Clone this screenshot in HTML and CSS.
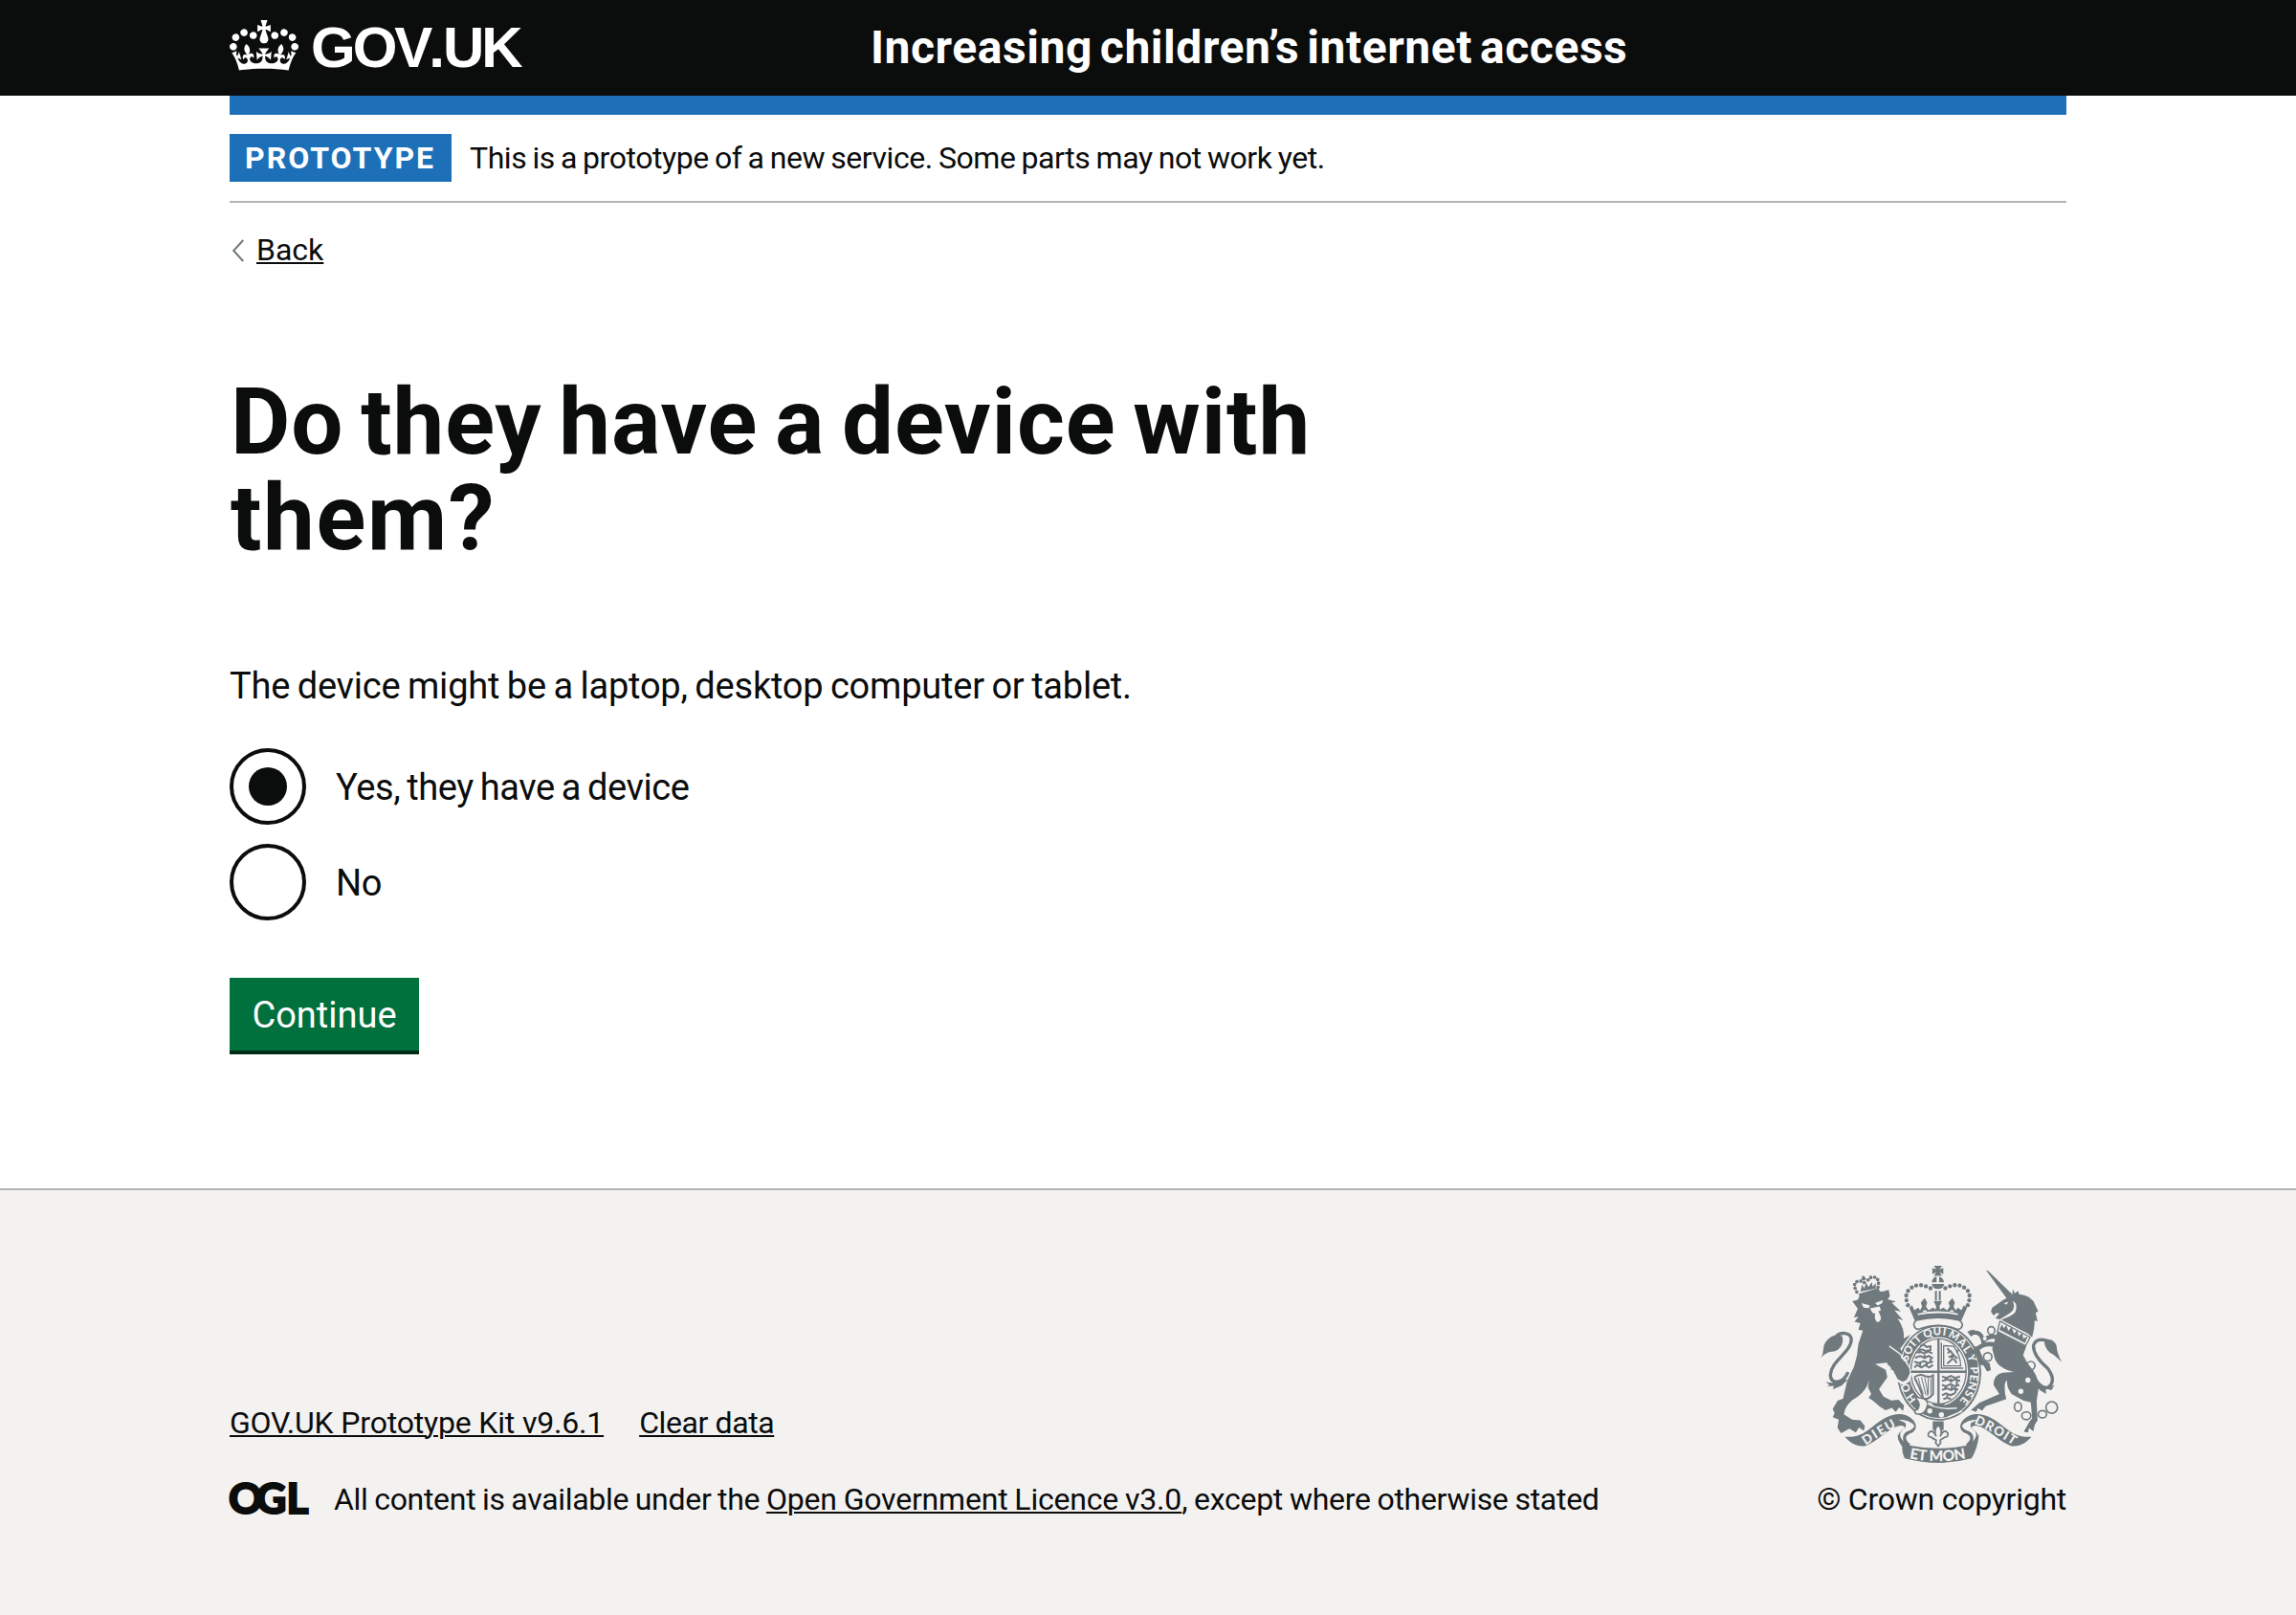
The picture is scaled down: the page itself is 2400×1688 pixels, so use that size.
FILE: index.html
```
<!DOCTYPE html>
<html lang="en">
<head>
<meta charset="utf-8">
<title>Do they have a device with them? - GOV.UK</title>
<link rel="stylesheet" href="styles.css">
</head>
<body>
<header class="header">
  <div class="container header-inner">
    <a class="logo" href="#">
      <svg class="logo-crown" viewBox="0 0 132 97" aria-hidden="true"><path fill="currentColor" d="M25 30.2c3.5 1.5 7.7-.2 9.1-3.7 1.5-3.6-.2-7.8-3.9-9.2-3.6-1.4-7.6.3-9.1 3.9-1.4 3.5.3 7.5 3.9 9zM9 39.5c3.6 1.5 7.8-.2 9.2-3.7 1.5-3.6-.2-7.8-3.9-9.1-3.6-1.5-7.6.2-9.1 3.8-1.4 3.5.3 7.5 3.8 9zM4.4 57.2c3.5 1.5 7.7-.2 9.1-3.8 1.5-3.6-.2-7.7-3.9-9.1-3.5-1.5-7.6.3-9.1 3.8-1.4 3.5.3 7.6 3.9 9.1zm38.3-21.4c3.5 1.5 7.7-.2 9.1-3.8 1.5-3.6-.2-7.7-3.9-9.1-3.6-1.5-7.6.3-9.1 3.8-1.3 3.6.4 7.7 3.9 9.1zm64.4-5.6c-3.6 1.5-7.8-.2-9.1-3.7-1.5-3.6.2-7.8 3.8-9.2 3.6-1.4 7.7.3 9.2 3.9 1.3 3.5-.4 7.5-3.9 9zm15.9 9.3c-3.6 1.5-7.7-.2-9.1-3.7-1.5-3.6.2-7.8 3.7-9.1 3.6-1.5 7.7.2 9.2 3.8 1.5 3.5-.3 7.5-3.8 9zm4.7 17.7c-3.6 1.5-7.8-.2-9.2-3.8-1.5-3.6.2-7.7 3.9-9.1 3.6-1.5 7.7.3 9.2 3.8 1.3 3.5-.4 7.6-3.9 9.1zM89.3 35.8c-3.6 1.5-7.8-.2-9.2-3.8-1.4-3.6.2-7.7 3.9-9.1 3.6-1.5 7.7.3 9.2 3.8 1.4 3.6-.3 7.7-3.9 9.1zM69.7 17.7l8.9 4.7V9.3l-8.9 2.8c-.2-.3-.5-.6-.9-.9L72.4 0H59.6l3.5 11.2c-.3.3-.6.5-.9.9l-8.8-2.8v13.1l8.8-4.7c.3.3.6.7.9.9l-5 15.4v.1c-.2.8-.4 1.6-.4 2.4 0 4.1 3.1 7.5 7 8.1h.2c.3 0 .7.1 1 .1.4 0 .7 0 1-.1h.2c4-.6 7.1-4.1 7.1-8.1 0-.8-.1-1.7-.4-2.4V34l-5.1-15.4c.4-.2.7-.6 1-.9zM66 92.8c16.9 0 32.8 1.1 47.1 3.2 4-16.9 8.9-26.7 14-33.5l-9.6-3.4c1 4.9 1.1 7.2 0 10.2-1.5-1.4-3-4.3-4.2-8.7L108.6 76c2.8-2 5-3.2 7.5-3.3-4.4 9.4-10 11.9-13.6 11.2-4.3-.8-6.3-4.6-5.6-7.9 1-4.7 5.7-5.9 8-.5 4.3-8.7-3-11.4-7.6-8.8 7.1-7.2 7.9-13.5 2.1-21.1-8 6.1-8.1 12.3-4.5 20.8-4.7-5.4-12.1-2.5-9.5 6.2 3.4-5.2 7.9-2 7.2 3.1-.6 4.3-6.4 7.8-13.5 7.2-10.3-.9-10.9-8-11.2-13.8 2.5-.5 7.1 1.8 11 7.3L80.2 60c-4.1 4.4-8 5.3-12.3 5.4 1.4-4.4 8-11.6 8-11.6H55.5s6.4 7.2 7.9 11.6c-4.2-.1-8-1-12.3-5.4l1.4 16.4c3.9-5.5 8.5-7.7 10.9-7.3-.3 5.8-.9 12.8-11.1 13.8-7.2.6-12.9-2.9-13.5-7.2-.7-5 3.8-8.3 7.1-3.1 2.7-8.7-4.6-11.6-9.4-6.2 3.7-8.5 3.6-14.7-4.6-20.8-5.8 7.6-5 13.9 2.2 21.1-4.7-2.6-11.9.1-7.7 8.8 2.3-5.5 7.1-4.2 8.1.5.7 3.3-1.3 7.1-5.7 7.9-3.5.7-9-1.8-13.5-11.2 2.5.1 4.7 1.3 7.5 3.3l-4.7-15.4c-1.2 4.4-2.7 7.2-4.3 8.7-1.1-3-.9-5.3 0-10.2l-9.5 3.4c5 6.9 9.9 16.7 14 33.5 14.8-2.1 30.8-3.2 47.7-3.2z"/></svg>
      <span class="logo-text">GOV<span class="logo-dot">.</span>UK</span>
    </a>
    <a class="service-name" href="#">Increasing children’s internet access</a>
  </div>
</header>

<div class="container">
  <div class="header-bar"></div>
  <div class="phase-banner">
    <strong class="tag">PROTOTYPE</strong>
    <span class="phase-text">This is a prototype of a new service. Some parts may not work yet.</span>
  </div>
  <a class="back-link" href="#">
    <svg class="chevron" viewBox="0 0 14 24" aria-hidden="true"><path d="M12.2 1 2.2 12l10 11" fill="none" stroke="#6f777b" stroke-width="2"/></svg>
    <span class="back-text">Back</span>
  </a>
  <main class="main">
    <h1 class="heading">Do they have a device with <span class="heading-end">them?</span></h1>
    <p class="body">The device might be a laptop, desktop computer or tablet.</p>
    <div class="radios">
      <div class="radio"><span class="radio-ring radio-on"></span><span class="radio-label">Yes, they have a device</span></div>
      <div class="radio"><span class="radio-ring"></span><span class="radio-label">No</span></div>
    </div>
    <button class="button" type="button">Continue</button>
  </main>
</div>

<footer class="footer">
  <div class="container footer-inner">
    <div class="footer-meta">
      <div class="footer-links">
        <a class="footer-link link-kit" href="#">GOV.UK Prototype Kit v9.6.1</a>
        <a class="footer-link link-clear" href="#">Clear data</a>
      </div>
      <div class="licence">
        <svg class="ogl" viewBox="0 0 82 34" aria-label="Open Government Licence"><text class="ogl-text" x="-1 27.5 59.5" y="32.5">OGL</text></svg>
        <span class="licence-text"><span class="lic-a">All content is available under the </span><a class="footer-link lic-b" href="#">Open Government Licence v3.0</a><span class="lic-c">, except where otherwise stated</span></span>
      </div>
    </div>
    <div class="copyright">
      <svg class="crest" viewBox="4 3 832 684" aria-hidden="true">
        <!-- lion: tail, body, face -->
        <g class="ink">
          <path class="line" stroke-width="10" d="M128 372C112 410 72 412 73 380C76 335 140 310 138 268C134 248 104 246 90 262"/>
          <path d="M40 331C56 318 46 292 60 276C78 256 98 252 110 262C116 282 104 304 84 308C66 308 52 318 40 331Z"/>
          <path d="M112 390C98 406 78 408 58 402L70 412L62 416L84 416L80 426L108 414L126 396Z"/>
          <path d="M141 152L158 147L163 137Q205 120 238 121L254 116L258 136L251 146L277 153L264 157L292 184L272 180L299 211L282 206Q304 236 301 268L322 256L290 300L312 335L321 375L312 398L295 402L283 394L292 380L272 378L280 364L260 364L268 350L250 350L256 342Q232 344 212 347L245 365L250 388L224 425L238 448L262 460L285 458L302 476L299 493L287 482L276 496L264 483L244 491L225 478L208 463L192 452L200 440L190 420L193 398Q185 430 158 448Q118 470 115 503L140 520L166 522L180 540L177 555L162 544L152 560L132 548L106 562L95 545L99 520L80 512L86 500L80 486L96 460L112 455L125 400L146 356Q158 320 160 285L174 243L160 240L166 220L148 216L160 200L146 202L158 175Z"/>
          <path d="M161 129L222 111L227 121L164 139Z"/>
          <path class="line" stroke-width="11" stroke-linecap="round" stroke-dasharray="0 12" d="M155 123Q137 90 166 89Q178 90 183 100M221 108Q228 74 201 77Q190 80 188 92"/>
          <path d="M172 72L180 76L184 84L176 88L170 84ZM166 122L172 100L178 112L184 94L191 108L202 92L204 106L214 96L214 112Z"/>
        </g>
        <g class="paper">
          <path d="M170 158L196 165L192 173L176 172ZM212 158L236 148L234 158L220 165Z"/>
          <path d="M196 174L226 168L230 180L222 184Q238 208 222 217Q208 214 212 190L204 188Z"/>
        </g>

        <!-- garter, motto and shield -->
        <g class="ink">
          <ellipse cx="411" cy="374" rx="131" ry="149"/>
        </g>
        <ellipse class="gap" cx="411" cy="374" rx="124" ry="142" stroke-width="3"/>
        <ellipse class="paper" cx="409" cy="370" rx="92" ry="107"/>
        <ellipse class="line" cx="409" cy="370" rx="86" ry="101" stroke-width="4"/>
        <path class="paper" d="M276 330L304 326L314 344L328 374L318 402L300 412L276 400Z"/>
        <path class="ink" d="M250 288L286 314L304 338L318 360L320 376L310 396L298 402L282 394L270 370L246 340Z"/>
        <path class="gap" stroke-width="4" d="M256 291L290 316L304 338"/>
        <g class="garter-text">
          <text transform="translate(325 453) rotate(-126)" y="12">H</text><text transform="translate(307 421) rotate(-110)" y="12">O</text>
          <text transform="translate(305 327) rotate(-69)" y="12">S</text><text transform="translate(315 303) rotate(-58)" y="12">O</text><text transform="translate(329 283) rotate(-49)" y="12">I</text><text transform="translate(343 269) rotate(-41)" y="12">T</text>
          <text transform="translate(375 251) rotate(-18)" y="12">Q</text><text transform="translate(405 245) rotate(-2)" y="12">U</text><text transform="translate(428 246) rotate(9)" y="12">I</text>
          <text transform="translate(458 259) rotate(30)" y="12">M</text><text transform="translate(483 280) rotate(45)" y="12">A</text><text transform="translate(499 301) rotate(57)" y="12">L</text>
          <text transform="translate(513 328) rotate(71)" y="12">Y</text>
          <text transform="translate(520 366) rotate(87)" y="12">P</text><text transform="translate(519 390) rotate(96)" y="12">E</text><text transform="translate(514 415) rotate(106)" y="12">N</text><text transform="translate(504 440) rotate(116)" y="12">S</text><text transform="translate(490 461) rotate(127)" y="12">E</text>
        </g>
        <g class="ink">
          <path class="line" stroke-width="7" d="M409 268V470M323 371H495"/>
          <path d="M388 470H430L420 480H398Z"/>
          <path class="line" stroke-width="6" d="M352 292l10 -6l10 8l12 -2v14M346 302l14 0l8 4l14 -2M338 312l14 -4l12 6l14 -6l12 6M336 328l16 -6l14 6l12 -6l14 8M334 340l14 4l16 -6l12 6l16 -4M334 358l8 -8l14 8l12 -8l12 8l12 -8M350 304v10M366 318v12M384 330v12M352 340v14M372 344v12"/>
          <path class="line" stroke-width="6" d="M420 386l14 4l14 -6l12 6l16 -4M420 400l16 -6l12 6l14 -6l14 6M420 412l12 4l14 -6l14 6l14 -4M420 428l14 -6l14 6l12 -6l10 6M420 444l12 -6l14 6l14 -6M424 456l12 -4l12 4M430 386v14M448 392v14M466 398v14M430 414v14M450 416v14M436 438v14M462 424v14"/>
          <path class="line" stroke-width="4" d="M418 280V360H486M425 290V353H478Q478 322 456 292Z"/>
          <path class="line" stroke-width="6" d="M436 298l8 8l-6 8M446 306l10 14l12 10M440 326l14 -6l-4 14l-14 12M456 330l10 14M466 312l4 -10"/>
          <path class="line" stroke-width="6" d="M334 388Q350 376 366 384Q382 390 392 382V440Q378 460 362 454Q352 420 334 388"/>
          <path class="line" stroke-width="3" d="M346 390Q352 418 362 440M356 388Q362 412 370 444M366 388Q372 412 376 446M377 390V440M385 390V442"/>
        </g>
        <path class="belt" d="M346 464Q330 446 350 452Q384 456 372 484Q362 508 340 502Q328 494 344 488Q352 476 346 464Z"/>
        <circle class="paper" cx="382" cy="493" r="8"/><circle class="paper" cx="418" cy="505" r="8"/>
        <path class="gap" stroke-width="4" d="M374 470Q410 490 466 484M438 512L482 494"/>

        <!-- imperial crown -->
        <g class="ink">
          <path d="M395 42H420L412 53L424 48V68L412 62L420 73H395L402 62L390 68V48L402 53Z"/>
          <path d="M388 93Q391 76 403 76V93ZM411 76Q424 78 426 93H411ZM388 98H427Q424 114 407 114Q391 114 388 98Z"/>
          <path class="line" stroke-width="13" stroke-linecap="round" stroke-dasharray="0 15.4" d="M314 164Q300 128 322 112Q344 94 374 107L390 114M500 164Q514 128 493 112Q470 94 440 107L424 114"/>
          <path class="line" stroke-width="6" d="M401 120V150M413 120V150"/>
          <path d="M318 172L327 164L334 180L346 172L352 180L358 168L354 156L366 142L374 156L370 168L378 180L392 172L400 178L402 168L394 152H420L412 168L414 178L424 172L436 180L444 168L440 156L452 142L460 156L456 168L462 180L470 172L480 180L488 164L498 172L480 212Q407 196 335 212Z"/>
          <path class="line" stroke-width="5" d="M340 211Q407 195 474 211Q490 222 478 236Q470 242 458 236Q407 218 356 236Q344 242 338 236Q326 222 340 211Z"/>
        </g>
        <path class="paper" d="M344 190Q407 176 470 190L469 195Q407 182 345 195ZM362 180h8l4 4l-14 2ZM446 180h8l4 6l-14 -2Z"/>
        <path class="paper" d="M345 216Q407 201 469 216Q479 224 472 230Q407 210 342 230Q334 224 345 216Z"/>

        <!-- unicorn -->
        <g class="ink">
          <path d="M557 56L564 58L640 132L622 144Z"/>
          <path d="M640 114L646 127L656 120L660 130Q700 134 710 164L719 183L711 188L717 214L708 212L706 238L700 264L686 252L604 210L632 198Q656 188 650 160L640 150Q650 176 632 188L600 208L586 205L598 190L590 188L580 196L572 184L576 172L610 148L638 134Z"/>
          <path d="M592 246L682 292L672 320Q684 346 704 368Q724 398 719 430L714 462L717 522L708 536L704 556L690 546L688 560L674 558L692 526L700 516L696 466L672 460L636 440Q620 420 622 398Q612 400 616 440L620 456L556 478L544 492L532 484L526 496L510 490L536 468L598 440L580 412Q580 380 608 374L644 372Q594 360 584 330L576 300Z"/>
          <path class="line" stroke-width="13" d="M592 264Q568 256 548 276Q544 256 530 250L506 248"/>
          <path class="line" stroke-width="14" d="M590 288Q560 282 545 290L528 300L544 340L566 352"/>
          <path d="M498 246L520 240L524 252L510 262ZM522 290L514 308L528 326L534 350L548 350L560 370L572 366L568 346L550 340Z"/>
          <path class="line" stroke-width="10" d="M706 388Q730 430 752 418Q776 398 748 360Q704 322 704 290Q712 262 752 276"/>
          <path d="M738 274Q764 262 776 290Q776 310 792 341Q770 318 756 312Q738 298 738 274Z"/>
          <path d="M700 380L726 412L752 420L770 412L760 428L742 424L744 440L724 428L702 404Z"/>
          <g class="links" stroke-width="5">
            <ellipse cx="573" cy="243" rx="11" ry="12"/><circle cx="562" cy="325" r="13"/><circle cx="696" cy="352" r="13"/><ellipse cx="656" cy="480" rx="11" ry="14"/><ellipse cx="682" cy="508" rx="14" ry="12"/><ellipse cx="732" cy="503" rx="13" ry="11"/><circle cx="761" cy="482" r="18"/>
          </g>
        </g>
        <circle class="paper" cx="687" cy="397" r="8"/><circle class="paper" cx="665" cy="432" r="8"/><circle class="paper" cx="553" cy="268" r="6"/>
        <path class="paper" d="M612 158L626 154L620 163Z"/>
        <path class="collar" stroke-width="4" d="M600 214L694 264L680 290L592 246Z"/>
        <path class="ink" d="M598 240L606 224L612 236L620 226L626 244L636 232L644 252L654 242L658 260L670 250L672 268L686 262L678 282Z"/>

        <!-- ribbon -->
        <g>
          <path class="ink" d="M118 573C150 576 172 568 200 545C240 512 270 498 300 504C334 512 352 544 328 560C306 568 300 578 322 597L306 610C270 575 282 562 306 546Q300 534 284 540C250 548 216 592 180 602C150 604 134 590 118 573Z"/>
          <path class="paper" d="M284 520Q322 520 334 540Q330 552 312 556Q294 564 300 588Q280 566 298 552Q312 544 306 530Z"/>
        </g>
        <g transform="matrix(-1 0 0 1 816 0)">
          <path class="ink" d="M118 573C150 576 172 568 200 545C240 512 270 498 300 504C334 512 352 544 328 560C306 568 300 578 322 597L306 610C270 575 282 562 306 546Q300 534 284 540C250 548 216 592 180 602C150 604 134 590 118 573Z"/>
          <path class="paper" d="M284 520Q322 520 334 540Q330 552 312 556Q294 564 300 588Q280 566 298 552Q312 544 306 530Z"/>
        </g>
        <path class="ink" d="M281 566Q290 590 318 600Q408 618 498 600Q526 590 535 566Q530 612 512 640Q408 668 304 640Q296 626 296 604Q284 588 281 566Z"/>
        <path id="dieu" fill="none" d="M183 600Q232 566 292 534"/>
        <path id="droit" fill="none" d="M519 532Q576 556 648 604"/>
        <path id="mon" fill="none" d="M318 640Q408 658 498 640"/>
        <g class="ribbon-text">
          <text><textPath href="#dieu" textLength="112">DIEU</textPath></text>
          <text><textPath href="#droit" textLength="140">DROIT</textPath></text>
          <text class="ribbon-mon"><textPath href="#mon" textLength="178">ET MON</textPath></text>
        </g>
        <g>
          <path class="ink" d="M391 525H425V552H391Z"/>
          <path class="belt" d="M408 536Q424 552 414 572Q426 546 438 562Q440 574 430 574Q420 580 414 584L416 592L408 602L400 592L402 584Q394 580 386 574Q374 574 378 562Q390 546 402 572Q392 552 408 536Z"/>
        </g>
      </svg>
      <a class="copyright-text" href="#">© Crown copyright</a>
    </div>
  </div>
</footer>
</body>
</html>
```
FILE: styles.css
```
* { box-sizing: border-box; }

body {
  margin: 0;
  background: #fff;
  color: #0b0c0c;
  font: 400 32px/50px Roboto, "Liberation Sans", sans-serif;
}

a { color: inherit; text-decoration: none; }

.container { width: 1920px; margin: 0 auto; }

.header { background: #0b0c0c; color: #fff; }
.header-inner { display: grid; grid-template-columns: 670px 1fr; height: 100px; align-items: center; }
.logo { display: flex; align-items: center; }
.logo-crown { display: block; width: 72px; height: 53px; margin-top: -5px; }
.logo-text { margin: 0 0 0 13px; font: 700 60px/60px "Liberation Sans", Arial, sans-serif; letter-spacing: -3px; }
.logo-dot { margin: 0 1px 0 -1px; }
.service-name { font-size: 48px; line-height: 50px; font-weight: 700; letter-spacing: 0.55px; word-spacing: -4.5px; white-space: nowrap; }

.header-bar { height: 20px; background: #1d70b8; }
.phase-banner { display: flex; padding: 20px 0; border-bottom: 2px solid #b1b4b6; }
.tag { width: 232px; margin-right: 19px; padding-left: 16px; background: #1d70b8; color: #fff; font-weight: 700; letter-spacing: 2px; }
.phase-text { letter-spacing: -0.43px; word-spacing: -1.4px; white-space: nowrap; }

.back-link { display: flex; align-items: center; width: max-content; margin-top: 24px; }
.chevron { width: 14px; height: 24px; margin: 2px 12px 0 2px; }
.back-text { text-decoration: underline; text-decoration-thickness: 2px; text-underline-offset: 2px; }

.main { padding-top: 105px; }
.heading { width: 1280px; margin: 0; padding-left: 1px; font-size: 96px; line-height: 100px; font-weight: 700; letter-spacing: 0.9px; word-spacing: -7px; }
.heading-end { display: block; letter-spacing: 1.6px; }
.body { margin: 101px 0 40px; font-size: 38px; letter-spacing: -0.22px; word-spacing: -1.6px; }

.radios { display: flex; flex-direction: column; gap: 20px; }
.radio { display: flex; align-items: center; gap: 31px; height: 80px; font-size: 38px; }
.radio-ring { display: grid; place-items: center; width: 80px; height: 80px; border: 4px solid #0b0c0c; border-radius: 50%; }
.radio-on::before { content: ""; width: 40px; height: 40px; border-radius: 50%; background: #0b0c0c; }
.radio-label { padding-top: 2px; letter-spacing: -0.4px; word-spacing: -2.1px; }

.button { display: block; width: 198px; height: 76px; margin: 60px 0 0; padding: 2px 0 0; border: 0; background: #00703c; box-shadow: 0 4px 0 #002d18; color: #fff; font: 400 38px/50px Roboto, sans-serif; }

.footer { height: 446px; margin-top: 144px; border-top: 2px solid #b1b4b6; background: #f3f2f1; }
.footer-inner { display: flex; justify-content: space-between; align-items: flex-end; height: 348px; }
.footer-meta { display: flex; flex-direction: column; gap: 30px; }
.footer-links { display: flex; gap: 37px; }
.footer-link { text-decoration: underline; text-decoration-thickness: 2px; text-underline-offset: 2px; }
.link-kit { letter-spacing: -0.18px; }
.link-clear { letter-spacing: -0.4px; }
.licence { display: flex; align-items: center; gap: 27px; }
.ogl { width: 82px; height: 34px; margin-top: -3px; overflow: visible; }
.ogl-text { font: 900 44px Lato, sans-serif; fill: #0b0c0c; stroke: #0b0c0c; stroke-width: 2px; }
.licence-text { white-space: pre; }
.lic-a { letter-spacing: -0.3px; word-spacing: -1px; }
.lic-b { letter-spacing: -0.2px; word-spacing: -0.8px; }
.lic-c { letter-spacing: -0.3px; word-spacing: -0.7px; }

.copyright { display: flex; flex-direction: column; align-items: flex-end; width: 280px; }
.crest { display: block; width: 280px; height: 230px; margin: 0 -10px 2px 0; overflow: visible; }
.copyright-text { letter-spacing: -0.25px; white-space: nowrap; }

.ink { fill: #707a7e; }
.paper { fill: #f3f2f1; }
.line { fill: none; stroke: #707a7e; }
.links { fill: none; stroke: #707a7e; }
.gap { fill: none; stroke: #f3f2f1; }
.belt { fill: #f3f2f1; stroke: #707a7e; stroke-width: 5px; }
.collar { fill: #f3f2f1; stroke: #707a7e; stroke-linejoin: round; }
.garter-text { fill: #f3f2f1; font: 900 34px Lato, sans-serif; text-anchor: middle; letter-spacing: 0; }
.ribbon-text { fill: #f3f2f1; font: 900 40px Lato, sans-serif; letter-spacing: 0; }
.ribbon-mon { font-size: 46px; }
```
